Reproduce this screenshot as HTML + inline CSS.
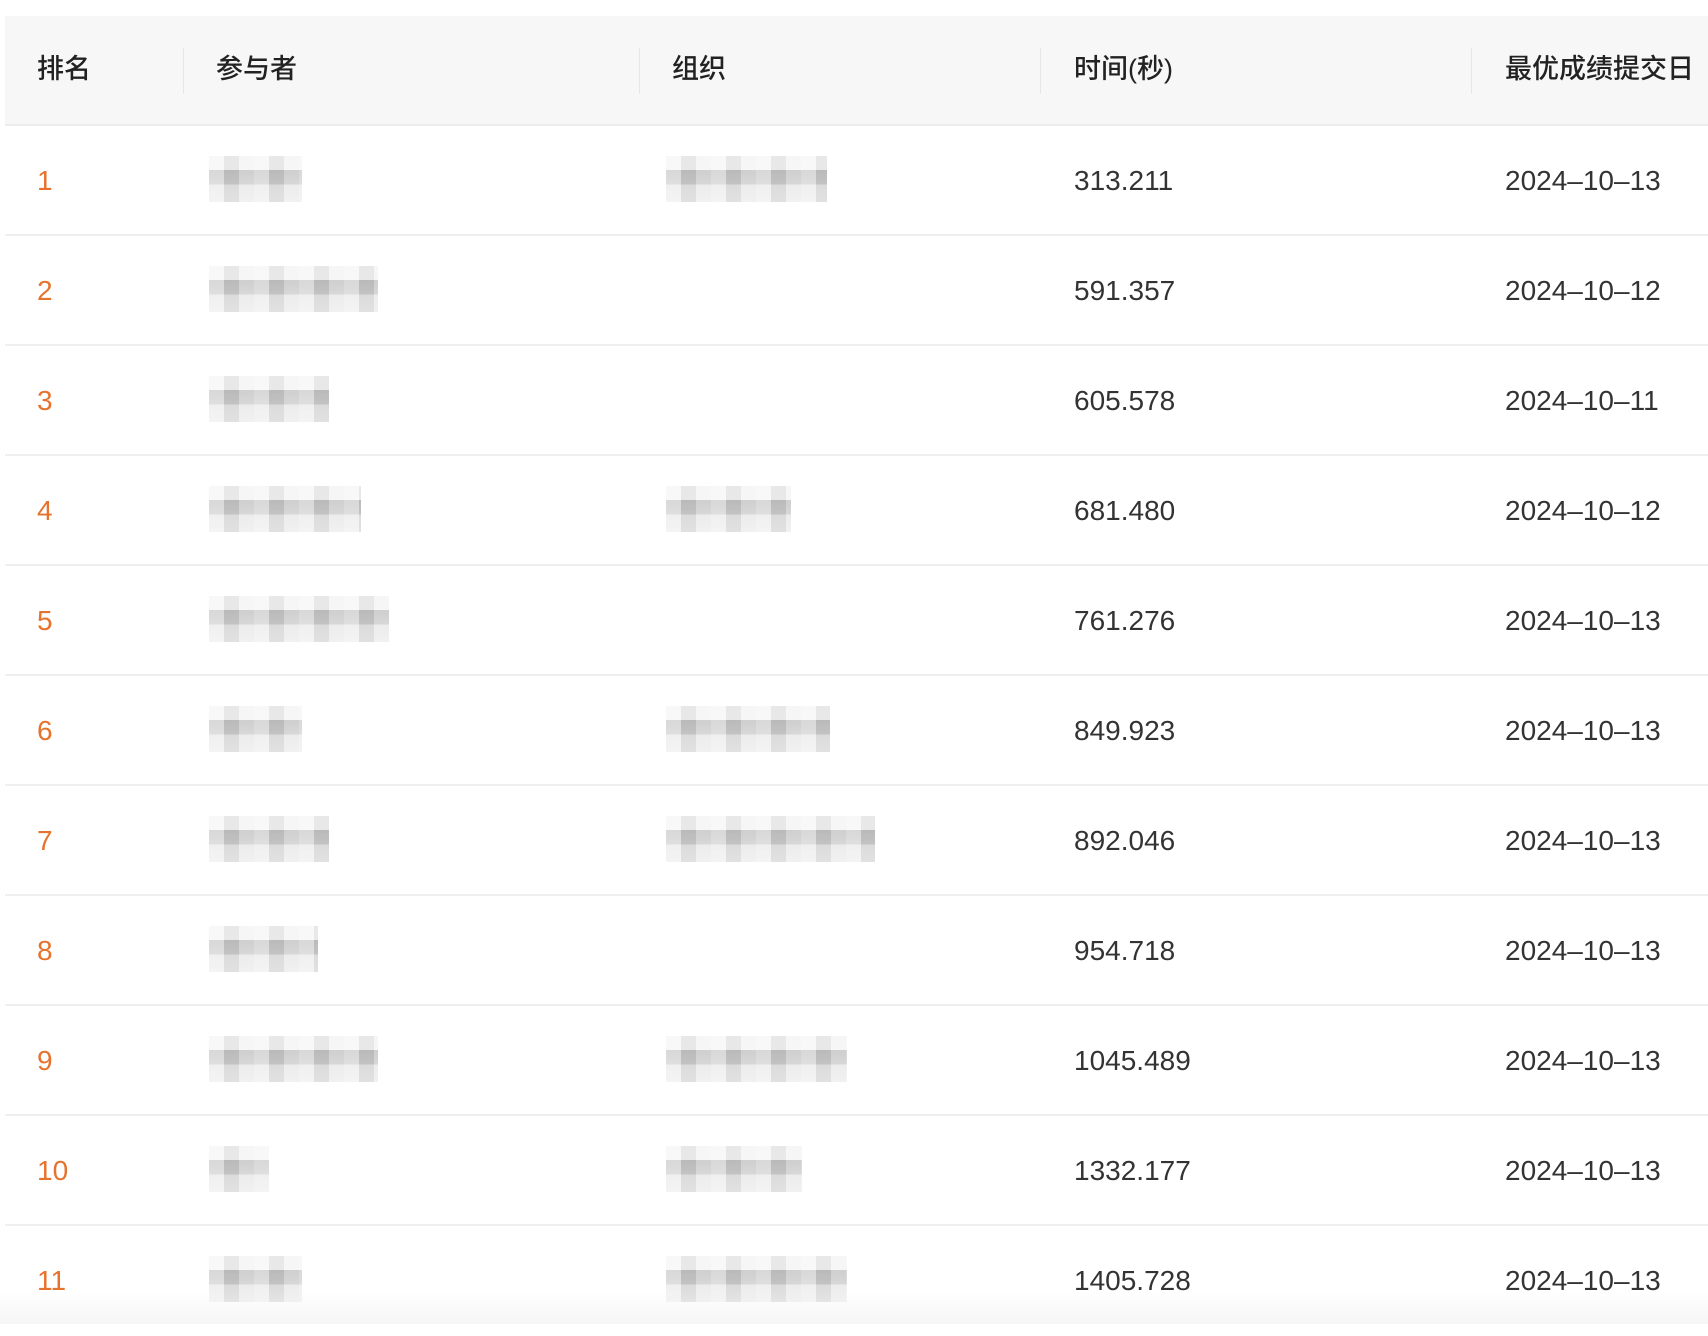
<!DOCTYPE html>
<html><head><meta charset="utf-8"><style>
html,body{margin:0;padding:0;background:#fff;}
body{width:1708px;height:1324px;overflow:hidden;position:relative;font-family:"Liberation Sans","Noto Sans CJK SC",sans-serif;}
.hdr{position:absolute;left:5px;top:16px;width:1703px;height:110px;background:#f7f7f7;border-bottom:2px solid #ececec;box-sizing:border-box;}
.hdr span{position:absolute;top:37px;font-size:27px;color:#222;font-weight:500;line-height:32px;}
.div{position:absolute;top:32px;width:1px;height:46px;background:#e6e6e6;}
.row{position:absolute;left:5px;width:1703px;height:110px;border-bottom:2px solid #efefef;box-sizing:border-box;}
.row span{position:absolute;top:39px;font-size:28px;line-height:32px;color:#333;}
.row .rk{left:32px;color:#e5732e;}
.row .t{left:1069px;}
.row .d{left:1500px;}
.b{position:absolute;top:30px;height:46px;background:linear-gradient(#f4f4f4 0,#f4f4f4 30%,#bdbdbd 30%,#c9c9c9 62%,#e6e6e6 62%,#ececec 100%);opacity:.9}
.b:after{content:"";position:absolute;left:0;top:0;right:0;bottom:0;background:repeating-linear-gradient(90deg,rgba(255,255,255,.35) 0 15px,rgba(0,0,0,.06) 15px 30px,rgba(255,255,255,.2) 30px 45px);}
.fade{position:absolute;left:0;top:1290px;width:1708px;height:34px;background:linear-gradient(rgba(255,255,255,0),rgba(240,240,240,.6));}
</style></head><body>
<div class="hdr">
<span style="left:32px">排名</span>
<div class="div" style="left:178px"></div>
<span style="left:211px">参与者</span>
<div class="div" style="left:634px"></div>
<span style="left:667px">组织</span>
<div class="div" style="left:1035px"></div>
<span style="left:1069px">时间(秒)</span>
<div class="div" style="left:1466px"></div>
<span style="left:1500px">最优成绩提交日</span>
</div>

<div class="row" style="top:126px"><span class="rk">1</span><div class="b" style="left:204px;width:93px"></div><div class="b" style="left:661px;width:161px"></div><span class="t">313.211</span><span class="d">2024–10–13</span></div>
<div class="row" style="top:236px"><span class="rk">2</span><div class="b" style="left:204px;width:169px"></div><span class="t">591.357</span><span class="d">2024–10–12</span></div>
<div class="row" style="top:346px"><span class="rk">3</span><div class="b" style="left:204px;width:120px"></div><span class="t">605.578</span><span class="d">2024–10–11</span></div>
<div class="row" style="top:456px"><span class="rk">4</span><div class="b" style="left:204px;width:152px"></div><div class="b" style="left:661px;width:125px"></div><span class="t">681.480</span><span class="d">2024–10–12</span></div>
<div class="row" style="top:566px"><span class="rk">5</span><div class="b" style="left:204px;width:180px"></div><span class="t">761.276</span><span class="d">2024–10–13</span></div>
<div class="row" style="top:676px"><span class="rk">6</span><div class="b" style="left:204px;width:93px"></div><div class="b" style="left:661px;width:164px"></div><span class="t">849.923</span><span class="d">2024–10–13</span></div>
<div class="row" style="top:786px"><span class="rk">7</span><div class="b" style="left:204px;width:120px"></div><div class="b" style="left:661px;width:209px"></div><span class="t">892.046</span><span class="d">2024–10–13</span></div>
<div class="row" style="top:896px"><span class="rk">8</span><div class="b" style="left:204px;width:109px"></div><span class="t">954.718</span><span class="d">2024–10–13</span></div>
<div class="row" style="top:1006px"><span class="rk">9</span><div class="b" style="left:204px;width:169px"></div><div class="b" style="left:661px;width:181px"></div><span class="t">1045.489</span><span class="d">2024–10–13</span></div>
<div class="row" style="top:1116px"><span class="rk">10</span><div class="b" style="left:204px;width:60px"></div><div class="b" style="left:661px;width:136px"></div><span class="t">1332.177</span><span class="d">2024–10–13</span></div>
<div class="row" style="top:1226px;border-bottom:none"><span class="rk">11</span><div class="b" style="left:204px;width:93px"></div><div class="b" style="left:661px;width:181px"></div><span class="t">1405.728</span><span class="d">2024–10–13</span></div>
<div class="fade"></div>
</body></html>
